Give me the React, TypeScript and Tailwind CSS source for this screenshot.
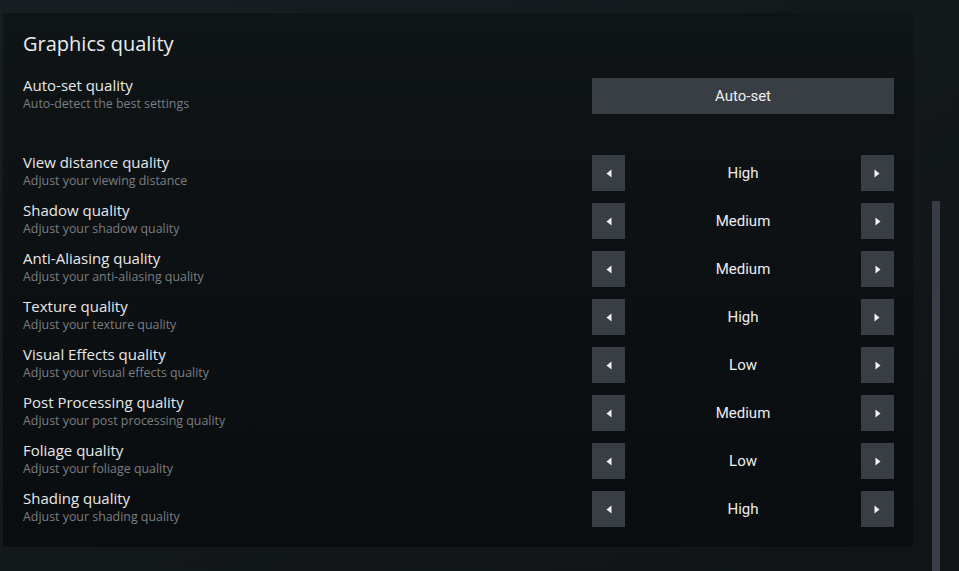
const rows = [
  { label: 'View distance quality', desc: 'Adjust your viewing distance', value: 'High' },
  { label: 'Shadow quality', desc: 'Adjust your shadow quality', value: 'Medium' },
  { label: 'Anti-Aliasing quality', desc: 'Adjust your anti-aliasing quality', value: 'Medium' },
  { label: 'Texture quality', desc: 'Adjust your texture quality', value: 'High' },
  { label: 'Visual Effects quality', desc: 'Adjust your visual effects quality', value: 'Low' },
  { label: 'Post Processing quality', desc: 'Adjust your post processing quality', value: 'Medium' },
  { label: 'Foliage quality', desc: 'Adjust your foliage quality', value: 'Low' },
  { label: 'Shading quality', desc: 'Adjust your shading quality', value: 'High' },
];

function Arrow({ dir }: { dir: 'left' | 'right' }) {
  return (
    <svg width="6" height="9" viewBox="0 0 6 9" className="block">
      {dir === 'left' ? <path d="M5.5 0.5 L0.5 4.5 L5.5 8.5 Z" fill="#f2f2f2" /> : <path d="M0.5 0.5 L5.5 4.5 L0.5 8.5 Z" fill="#f2f2f2" />}
    </svg>
  );
}

function Label({ title, desc }: { title: string; desc: string }) {
  return (
    <div className="flex flex-col pb-[3px] font-['Open_Sans',sans-serif]">
      <span className="text-[15px] leading-[18px] text-[#e8e8e8]">{title}</span>
      <span className="mt-[1px] text-[12.4px] leading-[18px] text-[#7b7e81]">{desc}</span>
    </div>
  );
}

export default function App() {
  return (
    <div className="relative w-[959px] h-[571px] overflow-hidden bg-gradient-to-br from-[#181e22] via-[#13181b] to-[#101417] pt-[13px] pl-[3px]">
      <div className="w-[910px] h-[534px] bg-gradient-to-b from-[#0f1417] to-[#0a0d0f] pl-[20px] pr-[19px] pt-[18px]">
        <h1 className="font-['Open_Sans',sans-serif] text-[20px] leading-[26px] text-[#ececec] mb-[21px]">Graphics quality</h1>

        <div className="flex items-center justify-between h-[36px]">
          <Label title="Auto-set quality" desc="Auto-detect the best settings" />
          <button className="w-[302px] h-[36px] bg-[#393d44] text-[15px] text-[#efefef] font-['Roboto',sans-serif]">
            Auto-set
          </button>
        </div>

        <div className="mt-[41px] flex flex-col gap-[12px]">
          {rows.map((r) => (
            <div key={r.label} className="flex items-center justify-between h-[36px]">
              <Label title={r.label} desc={r.desc} />
              <div className="w-[302px] h-[36px] flex items-center justify-between">
                <div className="w-[33px] h-[36px] bg-[#393d44] flex items-center justify-center">
                  <Arrow dir="left" />
                </div>
                <span className="text-[15px] text-[#ededed] font-['Roboto',sans-serif]">{r.value}</span>
                <div className="w-[33px] h-[36px] bg-[#393d44] flex items-center justify-center">
                  <Arrow dir="right" />
                </div>
              </div>
            </div>
          ))}
        </div>
      </div>

      <div className="absolute left-[932px] top-[201px] w-[8px] h-[370px] bg-[#393d45]" />
    </div>
  );
}
